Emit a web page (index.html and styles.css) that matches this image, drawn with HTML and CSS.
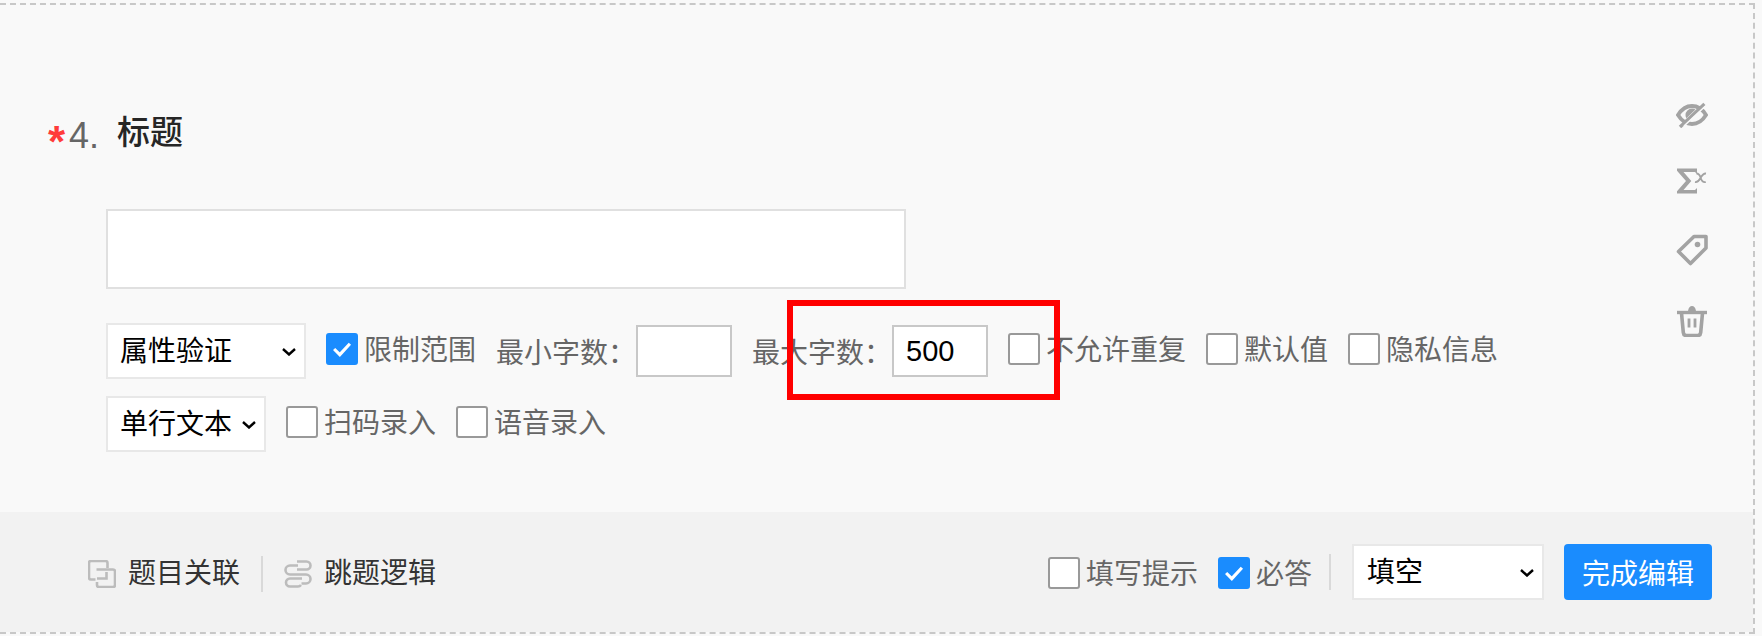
FILE: index.html
```html
<!DOCTYPE html>
<html lang="zh-CN">
<head>
<meta charset="utf-8">
<title>标题</title>
<link rel="stylesheet" href="styles.css">
</head>
<body>
<div class="card">
  <div class="content">
    <main class="main">
      <div class="heading">
        <span class="star">*</span><span class="num">4.</span><span class="title">标题</span>
      </div>
      <div class="fields">
        <input class="answer" type="text">
        <div class="row row-first">
          <span class="sel-wrap"><select class="sel sel-attr"><option>属性验证</option></select><svg class="chev" width="14" height="8" viewBox="0 0 14 8"><path d="M1 1l6 5.500L13 1" fill="none" stroke="#000" stroke-width="2.400"/></svg></span>
          <label class="check"><span class="cb on"><svg viewBox="0 0 32 32" width="28" height="28"><path d="M7 16l6.500 6.500L25 10" fill="none" stroke="#fff" stroke-width="3.600"/></svg></span>限制范围</label>
          <span class="num-field"><span class="lbl">最小字数：</span><input class="small" type="text"></span>
          <span class="num-field"><span class="lbl">最大字数：</span><input class="small" type="text" value="500"></span>
          <label class="check"><span class="cb"></span>不允许重复</label>
          <label class="check"><span class="cb"></span>默认值</label>
          <label class="check"><span class="cb"></span>隐私信息</label>
        </div>
        <div class="row row-second">
          <span class="sel-wrap"><select class="sel sel-type"><option>单行文本</option></select><svg class="chev" width="14" height="8" viewBox="0 0 14 8"><path d="M1 1l6 5.500L13 1" fill="none" stroke="#000" stroke-width="2.400"/></svg></span>
          <label class="check"><span class="cb"></span>扫码录入</label>
          <label class="check"><span class="cb"></span>语音录入</label>
        </div>
      </div>
    </main>
    <aside class="tools">
      <svg width="32" height="26" viewBox="0 0 32 26"><path d="M2 13C6 6.500 10.500 4 16 4S26 6.500 30 13C26 19.500 21.500 22 16 22S6 19.500 2 13Z" fill="none" stroke="#a3a3a3" stroke-width="3.800"/><path d="M16 6.500a6.500 6.500 0 0 0-6.500 6.500c0 1.200.3 2.300.9 3.300L19.500 7.500A6.500 6.500 0 0 0 16 6.500Z" fill="#a3a3a3"/><path d="M4 25L28.500 2" stroke="#a3a3a3" stroke-width="3.400"/><path d="M8 24L30 3.500" stroke="#f9f9f9" stroke-width="1.600"/></svg>
      <svg width="32" height="28" viewBox="0 0 32 28"><path d="M21 7V1.500H1v2.200L10 14 1 24.300V26.500H21V21l-2 2H7.500L15.300 14 7.500 5H19Z" fill="#a3a3a3"/><path d="M20.500 6.500c3 0 3.300 1.800 4.300 4.700s2 4.600 5 3.800M30 6.500c-2.500-.3-4.500 2.700-5.500 4.500s-3 4.500-5.500 4" fill="none" stroke="#a3a3a3" stroke-width="1.800"/></svg>
      <svg width="32" height="32" viewBox="0 0 32 32"><path d="M30 2.500H18L2.500 17.500 14.500 29.500 30 14Z" fill="none" stroke="#a3a3a3" stroke-width="3.600" stroke-linejoin="round"/><circle cx="21.500" cy="10.500" r="2.800" fill="#a3a3a3"/></svg>
      <svg width="32" height="32" viewBox="0 0 32 32"><path d="M1 7.500h30" stroke="#a3a3a3" stroke-width="3.400"/><path d="M12 6c.5-3.500 2-5 4-5s3.500 1.500 4 5Z" fill="#a3a3a3"/><path d="M5.500 8l1.800 19.500c.2 2 1.300 3 3 3h11.400c1.700 0 2.800-1 3-3L26.500 8" fill="none" stroke="#a3a3a3" stroke-width="3.600"/><path d="M13 13.500v9M19 13.500v9" stroke="#a3a3a3" stroke-width="2.800"/></svg>
    </aside>
  </div>
  <footer class="footer">
    <div class="foot-group foot-left">
      <a class="foot-link"><svg width="28" height="28" viewBox="0 0 28 28"><path d="M7.500 19.500H3a2 2 0 0 1-2-2V3a2 2 0 0 1 2-2h14.500a2 2 0 0 1 2 2v5M8.500 9.500H25a2 2 0 0 1 2 2V25a2 2 0 0 1-2 2H11a2 2 0 0 1-2-2v-3M9 18.500h9.500V12" fill="none" stroke="#bcbcbc" stroke-width="2.600"/></svg>题目关联</a>
      <span class="sep"></span>
      <a class="foot-link"><svg width="28" height="28" viewBox="0 0 28 28"><path d="M13 1.500h9.500a4 4 0 0 1 0 8H13M18 18.500H6a4 4 0 0 0 0 8h8a4 4 0 0 0 3-1.500" fill="none" stroke="#bcbcbc" stroke-width="2.600"/><path d="M14 5.500H6a4.500 4.500 0 0 0 0 9h16a4.500 4.500 0 0 1 0 9h-4.500" fill="none" stroke="#bcbcbc" stroke-width="2.600"/></svg>跳题逻辑</a>
    </div>
    <div class="foot-group foot-right">
      <label class="check"><span class="cb"></span>填写提示</label>
      <label class="check"><span class="cb on"><svg viewBox="0 0 32 32" width="28" height="28"><path d="M7 16l6.500 6.500L25 10" fill="none" stroke="#fff" stroke-width="3.600"/></svg></span>必答</label>
      <span class="sep"></span>
      <span class="sel-wrap"><select class="sel sel-kind"><option>填空</option></select><svg class="chev" width="14" height="8" viewBox="0 0 14 8"><path d="M1 1l6 5.500L13 1" fill="none" stroke="#000" stroke-width="2.400"/></svg></span>
      <button class="done" type="button">完成编辑</button>
    </div>
  </footer>
</div>
<div class="highlight"></div>
</body>
</html>
```
FILE: styles.css
```css
* { box-sizing: border-box; }
html, body { margin: 0; padding: 0; }
body {
  position: relative;
  width: 1762px;
  height: 636px;
  overflow: hidden;
  background: #f9f9f9;
  font-family: "Liberation Sans", "Noto Sans CJK SC", sans-serif;
  font-size: 28px;
  color: #666;
}
.card {
  margin-top: 3px;
  width: 1755px;
  height: 631px;
  border-top: 2px dashed #c8c8c8;
  border-right: 2px dashed #c8c8c8;
  border-bottom: 2px dashed #c8c8c8;
  display: flex;
  flex-direction: column;
}
.content { flex: 1; display: flex; justify-content: space-between; }
.main { padding: 104px 0 0 48px; }
.heading { display: flex; align-items: flex-start; height: 100px; }
.star { color: #ff3b3b; font-size: 44px; line-height: 44px; font-weight: 700; width: 21px; padding-top: 11px; height: 55px; }
.num { color: #666; font-size: 36px; line-height: 42px; width: 48px; padding-top: 6px; }
.title { color: #262626; font-size: 33px; line-height: 40px; font-weight: 500; padding-top: 4px; }
.fields { margin-left: 58px; }
.answer {
  display: block;
  width: 800px;
  height: 80px;
  border: 2px solid #e0e0e0;
  background: #fff;
  outline: none;
}
.row { display: flex; align-items: center; gap: 20px; }
.row-first { margin-top: 34px; }
.row-second { margin-top: 17px; }
.row .check { margin-bottom: 1px; }
.sel-wrap { position: relative; display: block; }
.chev { position: absolute; right: 10px; top: 25px; pointer-events: none; }
.sel {
  display: block;
  height: 56px;
  border: 2px solid #e8e8e8;
  border-radius: 0;
  background-color: #fff;
  color: #000;
  font-family: inherit;
  font-size: 28px;
  padding: 0 4px 0 12px;
  outline: none;
  appearance: none;
}
.sel-attr { width: 200px; }
.sel-type { width: 160px; }
.sel-kind { width: 192px; padding-left: 13px; }
.check { display: flex; align-items: center; gap: 6px; white-space: nowrap; line-height: 40px; }
.cb {
  flex: none;
  display: flex;
  align-items: center;
  justify-content: center;
  width: 32px;
  height: 32px;
  margin-top: -4px;
  border: 2px solid #999;
  border-radius: 3px;
  background: #fff;
}
.cb.on { background: #1a8cfe; border-color: #1a8cfe; }
.num-field { display: flex; align-items: center; }
.lbl { white-space: nowrap; }
.small {
  width: 96px;
  height: 52px;
  border: 2px solid #c8c8c8;
  background: #fff;
  color: #000;
  font-family: inherit;
  font-size: 29px;
  padding: 0 12px;
  outline: none;
}
.tools {
  width: 77px;
  padding-top: 97px;
  display: flex;
  flex-direction: column;
  align-items: flex-start;
  gap: 39px;
}
.footer {
  height: 120px;
  flex: none;
  background: #f2f2f2;
  display: flex;
  align-items: center;
  justify-content: space-between;
  padding: 0 41px 0 88px;
}
.foot-group { display: flex; align-items: center; gap: 21px; }
.foot-left { padding-top: 4px; }
.foot-right { gap: 0; }
.foot-right .check { margin-top: 6px; }
.foot-right .check + .check { margin-left: 20px; }
.foot-right .sep { margin: 0 21px 0 17px; }
.foot-link { display: flex; align-items: center; gap: 12px; color: #333; line-height: 40px; }
.sep { width: 2px; height: 36px; background: #d9d9d9; }
.done {
  width: 148px;
  height: 56px;
  margin-left: 20px;
  border: 0;
  border-radius: 4px;
  background: #1a8cfe;
  color: #fff;
  font-family: inherit;
  font-size: 28px;
  padding: 0;
}
.highlight {
  position: absolute;
  left: 787px;
  top: 300px;
  width: 273px;
  height: 100px;
  border: 6px solid #ff0000;
}
```
